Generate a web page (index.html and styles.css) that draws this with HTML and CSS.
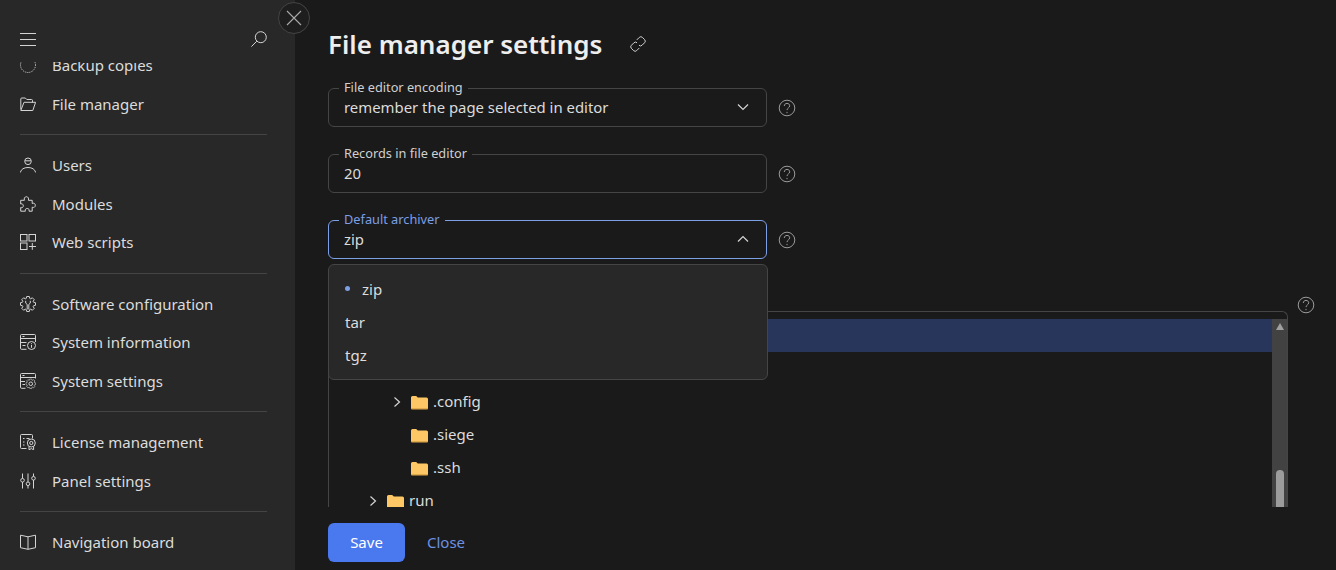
FILE: index.html
```html
<!DOCTYPE html>
<html lang="en">
<head>
    <meta charset="UTF-8">
    <meta name="viewport" content="width=device-width, initial-scale=1.0">
    <title>File manager settings</title>
    <link rel="stylesheet" href="styles.css">
</head>
<body>
    <svg class="sprites" aria-hidden="true">
        <symbol id="i-help" viewBox="0 0 18 18">
            <circle cx="9" cy="9" r="7.8"/>
            <path d="M6.3 7c0-1.600 1.100-2.600 2.700-2.600s2.700 1 2.700 2.400c0 2.100-2.700 2.200-2.700 4.300"/>
            <path d="M9 12.900v1.300"/>
        </symbol>
        <symbol id="i-gear" viewBox="0 0 16 16">
            <path d="M6.210 2.480 6.680.52h2.640l.47 1.960.84.350 1.730-1.050 1.860 1.860-1.050 1.730.350.840 1.960.47v2.640l-1.960.47-.350.840 1.050 1.730-1.860 1.860-1.730-1.050-.84.350-.47 1.960H6.680l-.47-1.960-.84-.350-1.730 1.050-1.860-1.860 1.050-1.730-.350-.84-1.960-.47V6.680l1.960-.47.350-.84-1.050-1.730 1.860-1.860 1.730 1.050z"/>
        </symbol>
        <symbol id="i-folder" viewBox="0 0 17 16">
            <path class="folder-back" d="M0 3.500a1.500 1.500 0 0 1 1.500-1.500h3.700l1.600 1.600h8.700a1.500 1.500 0 0 1 1.500 1.500v8.900a1 1 0 0 1-1 1H1a1 1 0 0 1-1-1z"/>
            <path class="folder-edge" d="M0 14h17v.6a1 1 0 0 1-1 1H1a1 1 0 0 1-1-1z"/>
        </symbol>
        <symbol id="i-right" viewBox="0 0 10 12">
            <path d="M2.500 1.500 7.500 6l-5 4.500"/>
        </symbol>
    </svg>

    <div class="app">
        <aside class="sidebar">
            <div class="sidebar-top">
                <svg class="icon" viewBox="0 0 16 16"><path d="M0 2.500h16M0 8.500h16M0 14.500h16"/></svg>
                <svg class="icon search-icon" viewBox="0 0 16 16"><circle cx="9.800" cy="6.200" r="5.500"/><path d="M5.800 10.200.4 15.600"/></svg>
            </div>
            <nav class="menu">
                <div class="menu-inner">
                    <a class="menu-item"><svg class="icon" viewBox="0 0 16 16"><circle cx="8" cy="8" r="7.500" stroke-dasharray="1 1"/></svg>Backup copies</a>
                    <a class="menu-item"><svg class="icon" viewBox="0 0 16 16"><path d="M.8 13.500V3a1 1 0 0 1 1-1h3.500l1.500 1.500h4.700a1 1 0 0 1 1 1v1.800"/><path d="M.8 14.500h12l2.800-8.200H4z"/></svg>File manager</a>
                    <hr class="menu-line">
                    <a class="menu-item"><svg class="icon" viewBox="0 0 16 16"><circle cx="8" cy="4.300" r="3.300"/><path d="M5 3.800h6"/><path d="M.3 15.500c.8-3.300 3.700-5 7.700-5s6.900 1.700 7.700 5"/></svg>Users</a>
                    <a class="menu-item"><svg class="icon" viewBox="0 0 16 16"><path d="M.7 4.300h3.700C3.800 2.400 4.700.7 6.400.7s2.600 1.700 2 3.600h3.800v3.200c1.700-.7 3.100-.1 3.100 1.800s-1.400 2.500-3.100 1.900v4H9c.6-1.700-.3-2.700-1.800-2.700s-2.400 1-1.800 2.700H.7v-3.700c1.500.6 2.600-.2 2.600-1.700S2.200 7.400.7 8z"/></svg>Modules</a>
                    <a class="menu-item"><svg class="icon" viewBox="0 0 16 16"><rect x=".5" y=".5" width="6.500" height="6.500"/><rect x="9" y=".5" width="6.500" height="6.500"/><rect x=".5" y="9" width="6.500" height="6.500"/><path d="M12.300 9v6.800M9 12.500h7"/></svg>Web scripts</a>
                    <hr class="menu-line">
                    <a class="menu-item"><svg class="icon" viewBox="0 0 16 16"><use href="#i-gear"/><path d="M5.700 4.800v2.300L7.200 8.400v5.100M10.300 4.800v2.300L8.800 8.400v5.100"/></svg>Software configuration</a>
                    <a class="menu-item"><svg class="icon" viewBox="0 0 16 16"><path d="M6.500 15.300H1.500a1 1 0 0 1-1-1V1.500a1 1 0 0 1 1-1h13a1 1 0 0 1 1 1v6.500"/><path d="M.5 4.500h15M.5 8.500h6M2.500 2.500h2M2.500 11.500h3"/><circle cx="11.500" cy="11.500" r="4"/><path d="M11.500 10.800v3M11.500 9v.8"/></svg>System information</a>
                    <a class="menu-item"><svg class="icon" viewBox="0 0 16 16"><path d="M5.500 15.300H1.500a1 1 0 0 1-1-1V1.500a1 1 0 0 1 1-1h13a1 1 0 0 1 1 1v4"/><path d="M.5 4.500h15M.5 8.500h4.500M2.500 2.500h2M2.500 11.500h2.500"/><use href="#i-gear" x="5.500" y="5.500" width="10.500" height="10.500"/><circle cx="10.750" cy="10.750" r="1.800"/></svg>System settings</a>
                    <hr class="menu-line">
                    <a class="menu-item"><svg class="icon" viewBox="0 0 16 16"><path d="M6.500 14.500H1.500a1 1 0 0 1-1-1V1.500a1 1 0 0 1 1-1h10a1 1 0 0 1 1 1v3"/><path d="M3 4.500h1.500M6.500 4.500h3M3 8h1.500M3 11h1.500"/><circle cx="11.300" cy="9" r="4"/><circle cx="11.300" cy="9" r="1.600"/><path d="M9 12.500v3.300l2.300-1.200 2.300 1.200v-3.300"/></svg>License management</a>
                    <a class="menu-item"><svg class="icon" viewBox="0 0 16 16"><path d="M2.500.5v5M2.500 9v6.500M8 .5v8.500M8 12.500v3M13.500.5v3M13.500 7v8.500"/><circle cx="2.500" cy="7.300" r="1.800"/><circle cx="8" cy="10.800" r="1.800"/><circle cx="13.500" cy="5.300" r="1.800"/></svg>Panel settings</a>
                    <hr class="menu-line">
                    <a class="menu-item"><svg class="icon" viewBox="0 0 16 16"><path d="M.5 1.200 8 2.800l7.500-1.600v12.500L8 15.300.5 13.700z"/><path d="M8 2.800v12.500"/></svg>Navigation board</a>
                </div>
            </nav>
        </aside>

        <!-- sits over the sidebar edge -->
        <button class="drawer-close" aria-label="Close">
            <svg viewBox="0 0 16 16"><path d="M1 1l14 14M15 1 1 15"/></svg>
        </button>

        <main class="content">
            <div class="title-row">
                <h1>File manager settings</h1>
                <svg class="icon link-icon" viewBox="0 0 16 16"><path d="M6.800 3.900 9.300 1.400a2.200 2.200 0 0 1 3.100 0l2.200 2.200a2.200 2.200 0 0 1 0 3.100l-2.500 2.500a2.200 2.200 0 0 1-3.100 0"/><path d="M9.200 12.100l-2.500 2.500a2.200 2.200 0 0 1-3.100 0l-2.200-2.200a2.200 2.200 0 0 1 0-3.100l2.500-2.500a2.200 2.200 0 0 1 3.100 0"/></svg>
            </div>

            <div class="form-row">
                <div class="field">
                    <span class="field-label">File editor encoding</span>
                    <span class="field-value">remember the page selected in editor</span>
                    <svg class="chevron" viewBox="0 0 12 8"><path d="M1 1.500 6 6.500l5-5"/></svg>
                </div>
                <svg class="help"><use href="#i-help"/></svg>
            </div>

            <div class="form-row">
                <div class="field">
                    <span class="field-label">Records in file editor</span>
                    <span class="field-value">20</span>
                </div>
                <svg class="help"><use href="#i-help"/></svg>
            </div>

            <div class="form-row">
                <div class="field field-open">
                    <span class="field-label">Default archiver</span>
                    <span class="field-value">zip</span>
                    <svg class="chevron" viewBox="0 0 12 8"><path d="M1 6.500 6 1.500l5 5"/></svg>
                    <div class="dropdown">
                        <div class="dropdown-item selected">zip</div>
                        <div class="dropdown-item">tar</div>
                        <div class="dropdown-item">tgz</div>
                    </div>
                </div>
                <svg class="help"><use href="#i-help"/></svg>
            </div>

            <div class="form-row tree-row">
                <div class="tree">
                    <div class="tree-list">
                        <div class="tree-node active"></div>
                        <div class="tree-node"></div>
                        <div class="tree-node depth-3"><svg class="arrow"><use href="#i-right"/></svg><svg class="folder"><use href="#i-folder"/></svg>.config</div>
                        <div class="tree-node depth-3"><span class="arrow"></span><svg class="folder"><use href="#i-folder"/></svg>.siege</div>
                        <div class="tree-node depth-3"><span class="arrow"></span><svg class="folder"><use href="#i-folder"/></svg>.ssh</div>
                        <div class="tree-node depth-2"><svg class="arrow"><use href="#i-right"/></svg><svg class="folder"><use href="#i-folder"/></svg>run</div>
                    </div>
                    <div class="scrollbar">
                        <span class="scroll-up"></span>
                        <span class="scroll-thumb"></span>
                    </div>
                </div>
                <svg class="help"><use href="#i-help"/></svg>
            </div>

            <div class="actions">
                <button class="btn-save">Save</button>
                <a class="btn-close">Close</a>
            </div>
        </main>
    </div>
</body>
</html>
```

FILE: styles.css
```css
* {
    box-sizing: border-box;
}
html, body {
    margin: 0;
    height: 570px;
    overflow: hidden;
}
body {
    font-family: "Noto Sans", "Open Sans", sans-serif;
    font-size: 15px;
    color: #dcdcdc;
    background-color: #1a1a1a;
}
.sprites {
    display: none;
}
.app {
    display: flex;
    height: 570px;
    position: relative;
}

/* sidebar */
.sidebar {
    width: 295px;
    flex: none;
    display: flex;
    flex-direction: column;
    background-color: #282828;
}
.sidebar-top {
    height: 62px;
    flex: none;
    display: flex;
    justify-content: space-between;
    align-items: flex-start;
    padding: 31px 28px 0 20px;
}
.icon {
    width: 16px;
    height: 16px;
    flex: none;
    fill: none;
    stroke: #d4d4d4;
    stroke-width: 1;
}
.menu {
    flex: 1;
    overflow: hidden;
    padding: 0 28px 0 20px;
}
.menu-inner {
    margin-top: -15.75px; /* list is scrolled a little */
}
.menu-item {
    display: flex;
    align-items: center;
    gap: 16px;
    height: 38.5px;
    padding-bottom: 1px;
    color: #dcdcdc;
}
.menu-line {
    margin: 11px 0;
    border: 0;
    border-top: 1px solid #444;
}
.drawer-close {
    position: absolute;
    left: 278px;
    top: 2px;
    width: 32px;
    height: 32px;
    padding: 7px;
    border: 1px solid #444;
    border-radius: 50%;
    background-color: #1e1e1e;
}
.drawer-close svg {
    display: block;
    fill: none;
    stroke: #aaa;
    stroke-width: 1.1;
}

/* form */
.content {
    flex: 1;
    min-width: 0;
    padding-left: 33px;
}
.title-row {
    height: 88px;
    padding-top: 26px;
    display: flex;
    align-items: flex-start;
    gap: 28px;
}
h1 {
    margin: 0;
    font-size: 26px;
    line-height: 36px;
    font-weight: 600;
    color: #eee;
}
.link-icon {
    margin-top: 10px;
}
.form-row {
    display: flex;
    align-items: center;
    gap: 11px;
    margin-bottom: 27px;
}
.field {
    position: relative;
    width: 439px;
    height: 39px;
    display: flex;
    align-items: center;
    justify-content: space-between;
    padding: 0 17px 1px 15px;
    border: 1px solid #454545;
    border-radius: 6px;
}
.field-label {
    position: absolute;
    left: 10px;
    top: -10px;
    padding: 0 5px;
    font-size: 12.75px;
    line-height: 16px;
    background-color: #1a1a1a;
    color: #d0d0d0;
}
.field-value {
    font-size: 14.9px;
}
.chevron {
    width: 12px;
    height: 8px;
    fill: none;
    stroke: #d4d4d4;
    stroke-width: 1.2;
}
.field-open {
    border-color: #7c9fe6;
}
.field-open .field-label {
    color: #7c9fe6;
}
.help {
    width: 18px;
    height: 18px;
    flex: none;
    fill: none;
    stroke: #9a9a9a;
    stroke-width: 1;
}
.dropdown {
    position: absolute;
    left: -1px;
    top: 43px;
    width: 440px;
    z-index: 2;
    padding: 7px 0 8px;
    background-color: #282828;
    border: 1px solid #454545;
    border-radius: 6px;
}
.dropdown-item {
    height: 33px;
    display: flex;
    align-items: center;
    padding-left: 16px;
}
.dropdown-item.selected {
    padding-left: 33px;
    position: relative;
}
.dropdown-item.selected::before {
    content: "";
    position: absolute;
    left: 16px;
    top: 14px;
    width: 5px;
    height: 5px;
    border-radius: 50%;
    background-color: #7c9fe6;
}

/* folder tree */
.tree-row {
    margin-top: 52px;
    margin-bottom: 16px;
    align-items: flex-start;
    gap: 9px;
}
.tree-row .help {
    margin-top: -15px;
}
.tree {
    width: 960px;
    height: 196px;
    display: flex;
    padding-top: 7px;
    overflow: hidden;
    border: 1px solid #454545;
    border-bottom: 0;
    border-radius: 6px 6px 0 0;
}
.tree-list {
    flex: 1;
    min-width: 0;
}
.tree-node {
    height: 33px;
    display: flex;
    align-items: center;
    padding-bottom: 2px;
}
.tree-node.active {
    background-color: #27365a;
}
.depth-2 {
    padding-left: 36px;
}
.depth-3 {
    padding-left: 60px;
}
.arrow {
    width: 10px;
    height: 12px;
    margin: 2px 3px 0;
    flex: none;
    fill: none;
    stroke: #d4d4d4;
    stroke-width: 1.2;
}
.folder {
    width: 17px;
    height: 16px;
    margin: 2px 5px 0 6px;
    flex: none;
}
.folder-back {
    fill: #fdc765;
}
.folder-edge {
    fill: #e0a94c;
}
.scrollbar {
    width: 15px;
    flex: none;
    display: flex;
    flex-direction: column;
    align-items: center;
    justify-content: space-between;
    padding-top: 4px;
    background-color: #424242;
}
.scroll-up {
    width: 0;
    height: 0;
    border-left: 4.500px solid transparent;
    border-right: 4.500px solid transparent;
    border-bottom: 7px solid #a0a0a0;
}
.scroll-thumb {
    width: 8px;
    height: 37px;
    border-radius: 4px 4px 0 0;
    background-color: #9c9c9c;
}
.actions {
    display: flex;
    align-items: center;
    gap: 22px;
}
.btn-save {
    width: 77px;
    height: 39px;
    padding: 0 0 1px;
    border: 0;
    border-radius: 6px;
    font: inherit;
    color: #fff;
    background-color: #4a78ef;
}
.btn-close {
    padding-bottom: 1px;
    color: #6d91e0;
}
```
